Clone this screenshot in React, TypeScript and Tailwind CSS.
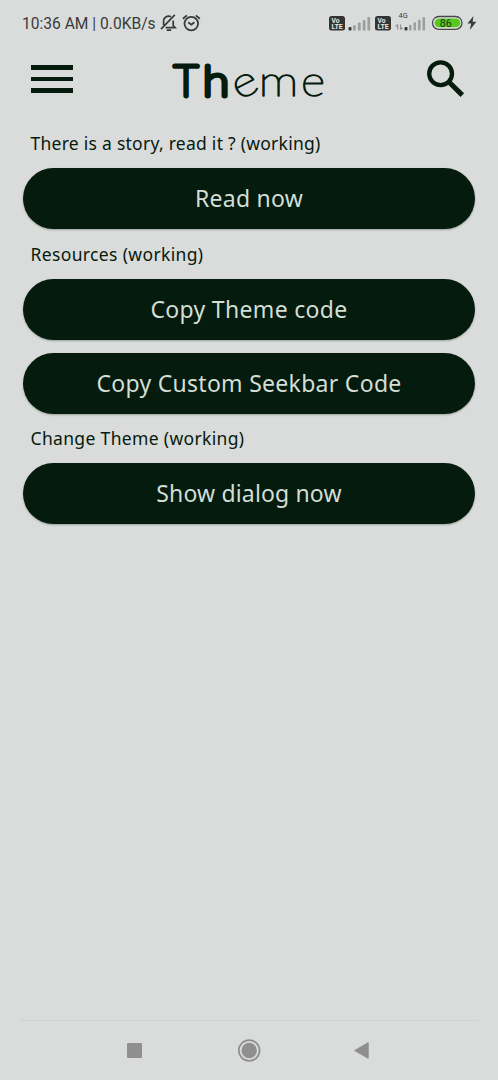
import type { ReactNode } from "react";

const textFont = "font-['Noto_Sans',sans-serif]";

function SectionLabel({ children, className }: { children: ReactNode; className: string }) {
  return (
    <h2 className={`${textFont} ml-[30.5px] h-[26px] text-[17.5px] leading-[26px] whitespace-nowrap text-[#061a0d] ${className}`}>
      {children}
    </h2>
  );
}

function PillButton({ children, className }: { children: ReactNode; className: string }) {
  return (
    <button
      className={`${textFont} mx-[23px] block h-[61px] rounded-full bg-[#041b0d] text-center text-[23px] leading-[61px] whitespace-nowrap text-[#d3ded5] shadow-[0_1px_2px_rgba(0,30,10,0.3)] ${className}`}
    >
      {children}
    </button>
  );
}

function VolteBadge() {
  return (
    <svg width="16" height="15" viewBox="0 0 16 15">
      <rect width="16" height="14.5" rx="2.5" fill="#333535" />
      <g fill="#e4e6e5" fontFamily="Roboto, sans-serif" fontWeight="700" fontSize="6.8">
        <text x="2.6" y="6.6" textLength="8" lengthAdjust="spacingAndGlyphs">Vo</text>
        <text x="2.4" y="12.8" textLength="11.4" lengthAdjust="spacingAndGlyphs">LTE</text>
      </g>
    </svg>
  );
}

function SignalBars() {
  return (
    <svg width="23" height="15" viewBox="0 0 23 15">
      <rect x="0.5" y="11" width="3" height="3.5" rx="1" fill="#333535" />
      <g fill="#9da09e">
        <rect x="5" y="9.2" width="2.8" height="5.3" rx="0.8" />
        <rect x="9.9" y="6.5" width="2.8" height="8" rx="0.8" />
        <rect x="14.7" y="4" width="2.8" height="10.5" rx="0.8" />
        <rect x="19.4" y="1" width="2.8" height="13.5" rx="0.8" />
      </g>
    </svg>
  );
}

function StatusBar() {
  return (
    <div className="flex h-[46px] items-center pt-px pl-[22px] font-['Roboto',sans-serif] text-[#393b3a]">
      <span className="w-[134px] text-[15.6px] leading-5 whitespace-nowrap">10:36 AM | 0.0KB/s</span>
      <svg className="mt-[-2px] ml-[4px]" width="18" height="19" viewBox="0 0 18 19" fill="none" stroke="#393b3a" strokeWidth="1.7">
        <path d="M14.8 1.8 1 16.2M3.6 12V8.4a4.9 4.9 0 0 1 7.3-4.6M13.2 7.6v5l1.9 2H5.6M6.8 17.2h4.4" />
      </svg>
      <svg className="mt-[-2px] ml-[4px]" width="20" height="18" viewBox="0 0 20 18" fill="none" stroke="#393b3a" strokeWidth="1.8">
        <circle cx="9.3" cy="9.6" r="6.8" />
        <path d="m0.9 4.8 4-3.4M17.8 4.8l-4-3.4M6.2 8.3l3.1 2.4 3.1-2.4" />
      </svg>
      <div className="ml-[127px] flex items-center">
        <VolteBadge />
        <div className="ml-[3px] flex"><SignalBars /></div>
        <div className="ml-[4px] flex"><VolteBadge /></div>
        <svg className="mt-[-4px] ml-[4px]" width="32" height="22" viewBox="0 -2 32 22">
          <text x="3.5" y="5.3" fill="#393b3a" fontFamily="Roboto, sans-serif" fontSize="7.4">4G</text>
          <path d="M2.7 16.5v-5m-2 2 2-2M5.5 11.5v5m0 0 2-2" fill="none" stroke="#8b8e8c" strokeWidth="1.1" />
          <rect x="9.5" y="14" width="3" height="3.5" rx="1" fill="#333535" />
          <g fill="#9da09e">
            <rect x="14" y="11.7" width="2.6" height="5.8" rx="0.8" />
            <rect x="18.5" y="9.3" width="2.6" height="8.2" rx="0.8" />
            <rect x="23" y="6.8" width="2.6" height="10.7" rx="0.8" />
            <rect x="27.5" y="4" width="2.6" height="13.5" rx="0.8" />
          </g>
        </svg>
        <svg className="mt-[-2px] ml-[4px]" width="33" height="16" viewBox="0 0 33 16">
          <rect x="1.5" y="1.5" width="29.5" height="12.8" rx="6.4" fill="#e0e3e1" stroke="#444745" strokeWidth="1.3" />
          <path d="M8 3.5h17a4.3 4.3 0 0 1 0 8.8H8a4.3 4.3 0 0 1 0-8.8Z" fill="#57c91d" />
          <text x="8.8" y="11.7" fill="#1e3514" fontFamily="Roboto, sans-serif" fontSize="10.8">86</text>
        </svg>
        <svg className="mt-[-1px] ml-[3px]" width="10" height="14" viewBox="0 0 10 14">
          <path d="M6.5 0 .5 7.6h3.7L2.8 14 9.4 5.7H5.6Z" fill="#393b3a" />
        </svg>
      </div>
    </div>
  );
}

function Wordmark() {
  return (
    <svg width="164" height="64" viewBox="166 46 164 64" fill="#041b0d" stroke="#041b0d" strokeLinejoin="round" fontFamily="Lato, sans-serif">
      <g fontSize="41" fontWeight="100" strokeWidth="4.8">
        <text x="174" y="95.5" textLength="24" lengthAdjust="spacingAndGlyphs">T</text>
        <text x="203" y="95.5" textLength="26" lengthAdjust="spacingAndGlyphs">h</text>
      </g>
      <g fontSize="42" fontWeight="100" strokeWidth="1.4">
        <text x="233" y="96" textLength="25" lengthAdjust="spacingAndGlyphs" transform="rotate(-27 245.5 86)">e</text>
        <text x="258.5" y="96" textLength="40" lengthAdjust="spacingAndGlyphs">m</text>
        <text x="301" y="96" textLength="24" lengthAdjust="spacingAndGlyphs">e</text>
      </g>
    </svg>
  );
}

function Header() {
  return (
    <header className="flex h-[84px] items-start pl-[31px]">
      <button className="mt-[19px] flex flex-col gap-[7px]" aria-label="Menu">
        <span className="h-[5px] w-[42px] bg-[#041b0d]" />
        <span className="h-[4px] w-[42px] bg-[#041b0d]" />
        <span className="h-[5px] w-[42px] bg-[#041b0d]" />
      </button>
      <h1 className="ml-[93px]">
        <Wordmark />
      </h1>
      <button className="mt-[13px] ml-[96px]" aria-label="Search">
        <svg width="39" height="39" viewBox="0 0 39 39" fill="none" stroke="#041b0d">
          <circle cx="14.6" cy="14.7" r="11.4" strokeWidth="4.3" />
          <path d="m23 23 13.3 13.1" strokeWidth="5" />
        </svg>
      </button>
    </header>
  );
}

function NavigationBar() {
  return (
    <nav className="mt-auto h-[60px]">
      <div className="mx-5 h-px bg-[#cfd2d0]" />
      <div className="flex h-[58px] items-center pl-[127px]">
        <span className="h-[15px] w-[15px] rounded-[1px] bg-[#8e8f8e]" />
        <svg className="ml-[96px]" width="23" height="23" viewBox="0 0 23 23">
          <circle cx="11.2" cy="11.5" r="10.4" fill="none" stroke="#8e8f8e" strokeWidth="1.7" />
          <circle cx="11.2" cy="11.5" r="7.7" fill="#8e8f8e" />
        </svg>
        <svg className="ml-[93px]" width="15" height="17" viewBox="0 0 15 17">
          <path d="M14.2.7v15.6L.7 8.5Z" fill="#8e8f8e" stroke="#8e8f8e" strokeLinejoin="round" />
        </svg>
      </div>
    </nav>
  );
}

export default function App() {
  return (
    <div className="flex h-[1080px] w-[498px] flex-col overflow-hidden bg-[#dadcdb]">
      <StatusBar />
      <Header />
      <main className="flex flex-col">
        <SectionLabel className="tracking-[0.26px]">There is a story, read it ? (working)</SectionLabel>
        <PillButton className="mt-[12px] tracking-[0.25px]">Read now</PillButton>
        <SectionLabel className="mt-[12px] tracking-[0.36px]">Resources (working)</SectionLabel>
        <PillButton className="mt-[12px] tracking-[0.32px]">Copy Theme code</PillButton>
        <PillButton className="mt-[12.5px] tracking-[0.29px]">Copy Custom Seekbar Code</PillButton>
        <SectionLabel className="mt-[11.5px] tracking-[0.34px]">Change Theme (working)</SectionLabel>
        <PillButton className="mt-[12px] tracking-[0.15px]">Show dialog now</PillButton>
      </main>
      <NavigationBar />
    </div>
  );
}
